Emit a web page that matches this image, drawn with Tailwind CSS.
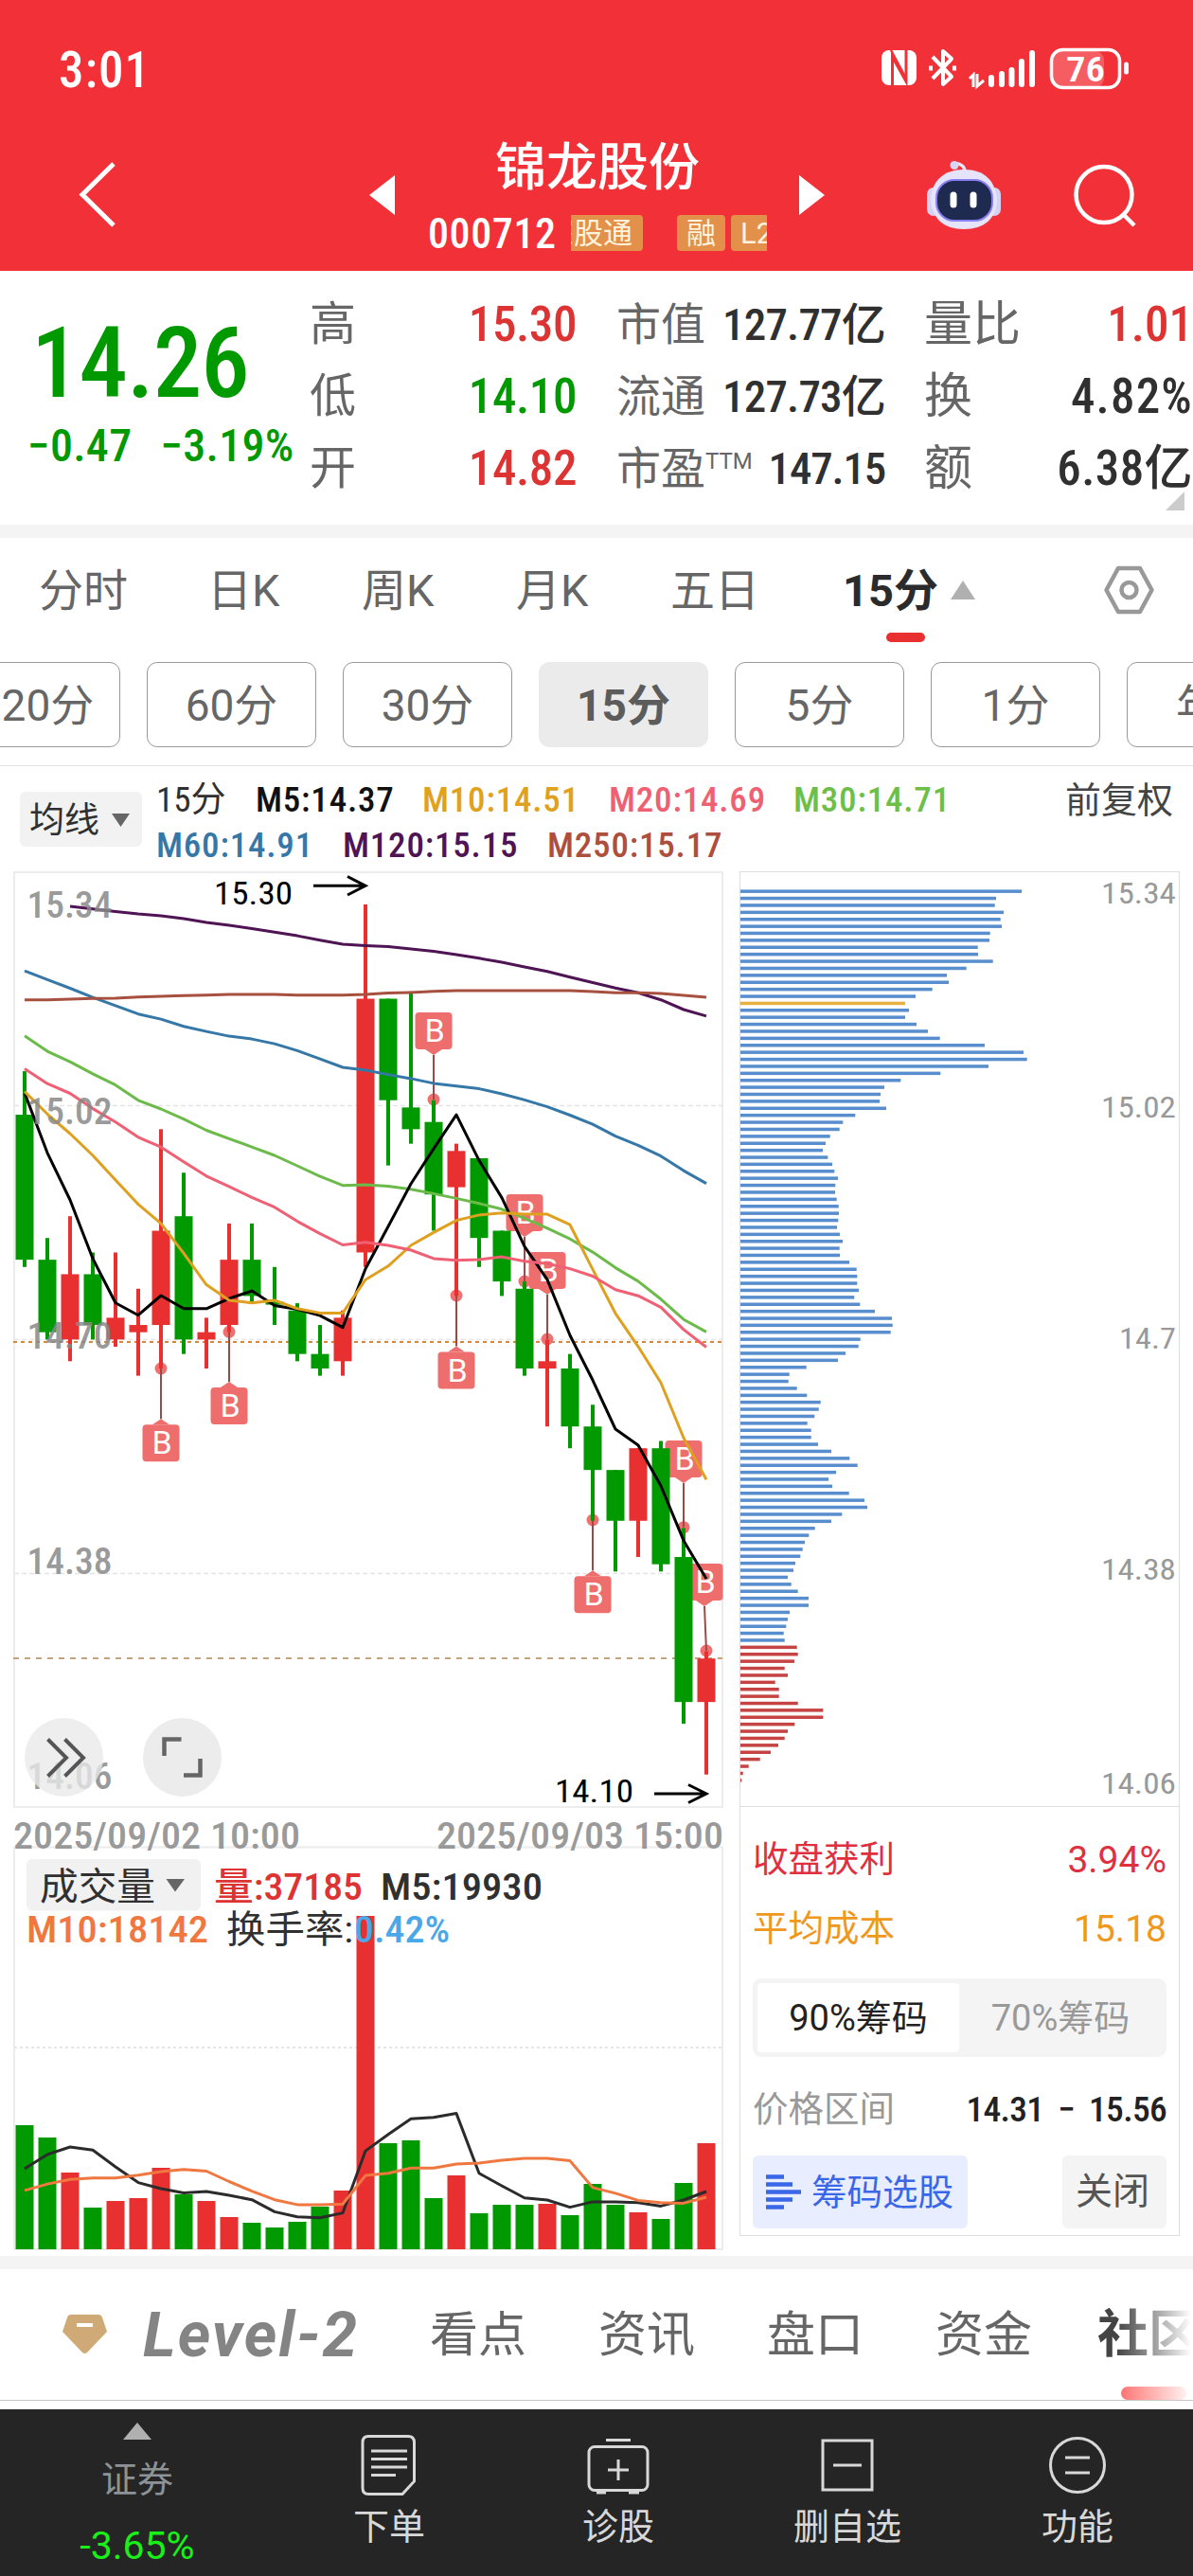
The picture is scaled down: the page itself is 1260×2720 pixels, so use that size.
<!DOCTYPE html>
<html lang="zh-CN">

<head>
  <meta charset="UTF-8">
  <title>锦龙股份 000712</title>
  <script src="https://cdn.jsdelivr.net/npm/@tailwindcss/browser@4"></script>
</head>

<body class="w-[1260px] h-[2720px] overflow-hidden bg-white text-[#303030] leading-none font-stretch-85% font-['Roboto','Noto_Sans_CJK_SC',sans-serif]">
  <!-- Header -->
  <header class="h-[286px] bg-[#f23037] text-white">
    <div class="h-[146px] pt-[49px] pl-[62px] pr-[66px] flex justify-between items-start">
      <span class="text-[53px] leading-[50px] font-medium tracking-[1px]">3:01</span>
      <svg width="264" height="50" viewBox="930 49 264 50" fill="none" stroke="#fff">
        <!-- NFC -->
        <rect x="931" y="53" width="37" height="37" rx="8" fill="#fff" stroke="none" />
        <path d="M942.500 90V60L957 86V53" stroke="#f23037" stroke-width="3" />
        <path d="M941 53L957 83" stroke="#f23037" stroke-width="2.500" />
        <!-- Bluetooth -->
        <path d="M985 60L1005 81L996 89V54L1005 62L985 83" stroke-width="4" stroke-linejoin="round" />
        <path d="M981 72h4M1006 72h4" stroke-width="5" />
        <!-- Signal -->
        <path d="M1024 83L1028 79V92M1032 78V91L1039 85" stroke-width="3" />
        <path d="M1047 82v7M1058 78v11M1068.500 74v15M1079 65v24M1090 56v33" stroke-width="6" stroke-linecap="round" />
        <!-- Battery -->
        <rect x="1111" y="54" width="55" height="38" rx="9" fill="#fff" fill-opacity=".22" stroke="none" />
        <rect x="1110.500" y="52.500" width="72" height="40" rx="12" stroke-width="3.500" />
        <path d="M1189.500 68v8" stroke-width="5" stroke-linecap="round" />
        <text x="1126" y="86" font-size="37" font-weight="600" fill="#fff" stroke="none" textLength="41" lengthAdjust="spacingAndGlyphs">76</text>
      </svg>
    </div>
    <div class="h-[120px] flex items-center">
      <svg class="ml-[80px]" width="46" height="76" viewBox="0 0 46 76" fill="none" stroke="#fff" stroke-width="5"><path d="M40 5L7 37.500L40 70" /></svg>
      <svg class="ml-[264px]" width="27" height="42" viewBox="0 0 27 42"><path d="M27 0V42L0 21Z" fill="#fff" /></svg>
      <div class="ml-[34px] w-[360px] flex flex-col items-center">
        <h1 class="pt-[2px] text-[54px] leading-[60px] font-medium">锦龙股份</h1>
        <div class="mt-[18px] w-[358px] h-[40px] flex items-center">
          <span class="w-[151px] pt-[2px] text-[44px] font-medium tracking-[0.6px]">000712</span>
          <div class="w-[207px] h-[38px] overflow-hidden flex text-[31px] leading-[39px] text-[#fff3dc]">
            <span class="w-[76px] h-[38px] shrink-0 rounded-r bg-[#e2904a] overflow-hidden flex justify-end pr-[11px]"><span class="shrink-0 whitespace-nowrap">深股通</span></span>
            <span class="ml-[36px] w-[51px] h-[38px] shrink-0 rounded bg-[#e2904a] text-center">融</span>
            <span class="ml-[6px] w-[60px] h-[38px] shrink-0 rounded bg-[#e2904a] pl-[10px] font-stretch-100%">L2</span>
          </div>
        </div>
      </div>
      <svg class="ml-[33px]" width="27" height="42" viewBox="0 0 27 42"><path d="M0 0V42L27 21Z" fill="#fff" /></svg>
      <!-- Robot -->
      <svg class="ml-[106px]" width="80" height="76" viewBox="976 167 80 76" fill="none">
        <path d="M1018 180C1018 174 1012 171 1007 172" stroke="#e9e6fb" stroke-width="3.500" />
        <circle cx="1007" cy="173.500" r="4.500" fill="#d9d6f5" />
        <rect x="978" y="197" width="14" height="30" rx="7" fill="#d5d3f4" />
        <rect x="1042" y="197" width="14" height="30" rx="7" fill="#d5d3f4" />
        <path d="M1017 178C1039 178 1050 190 1052 209C1052 230 1038 241 1017 241C996 241 983 230 982 209C983 190 996 178 1017 178Z" fill="#e6e4fa" />
        <rect x="988" y="189" width="59" height="43" rx="19" fill="#1f2a50" stroke="#8a7ff0" stroke-width="2" />
        <path d="M1006 205v10M1027 205v10" stroke="#fff" stroke-width="7" stroke-linecap="round" />
      </svg>
      <svg class="ml-[76px]" width="68" height="68" viewBox="1132 173 68 68" fill="none" stroke="#fff" stroke-width="4.500"><circle cx="1165" cy="206.500" r="29.500" /><path d="M1184 226L1197 239" /></svg>
    </div>
  </header>

  <!-- Quote summary -->
  <section class="relative h-[268px] flex pt-[19px]">
    <div class="w-[328px] pl-[30px] text-[#009900] font-[480]">
      <div class="pl-[3px] pt-[28px] text-[103px] leading-[102px] tracking-[-1px]">14.26</div>
      <div class="mt-[13px] flex gap-[30px] text-[48px] leading-[46px] tracking-[0.3px]"><span class="-ml-[1px]">−0.47</span><span>−3.19%</span></div>
    </div>
    <dl class="w-[281px] text-[51px] leading-[76px] font-[480]">
      <div class="flex justify-between"><dt class="-ml-[1px] text-[49px] font-normal text-[#666]">高</dt><dd class="text-[#dd3333] tracking-[-0.4px]">15.30</dd></div>
      <div class="flex justify-between"><dt class="-ml-[1px] text-[49px] font-normal text-[#666]">低</dt><dd class="text-[#009900] tracking-[-0.4px]">14.10</dd></div>
      <div class="flex justify-between"><dt class="-ml-[1px] text-[49px] font-normal text-[#666]">开</dt><dd class="text-[#dd3333] tracking-[-0.4px]">14.82</dd></div>
    </dl>
    <dl class="ml-[42px] w-[284px] text-[47px] leading-[76px] font-[480]">
      <div class="flex justify-between"><dt class="font-normal text-[#666]">市值</dt><dd class="tracking-[-0.8px]">127.77亿</dd></div>
      <div class="flex justify-between"><dt class="font-normal text-[#666]">流通</dt><dd class="tracking-[-0.8px]">127.73亿</dd></div>
      <div class="flex justify-between"><dt class="font-normal text-[#666] flex">市盈<span class="text-[24px] leading-[60px] font-stretch-100%">TTM</span></dt><dd class="tracking-[-1.2px]">147.15</dd></div>
    </dl>
    <dl class="ml-[41px] w-[284px] text-[51px] leading-[76px] font-[480]">
      <div class="flex justify-between"><dt class="text-[51px] font-normal text-[#666]">量比</dt><dd class="text-[#dd3333]">1.01</dd></div>
      <div class="flex justify-between"><dt class="text-[51px] font-normal text-[#666]">换</dt><dd class="tracking-[1.2px]">4.82%</dd></div>
      <div class="flex justify-between"><dt class="text-[51px] font-normal text-[#666]">额</dt><dd class="tracking-[0.4px]">6.38亿</dd></div>
    </dl>
    <svg class="absolute right-[9px] top-[233px]" width="20" height="20"><path d="M20 0V20H0Z" fill="#ccc" /></svg>
  </section>
  <div class="h-[14px] bg-[#f4f4f4]"></div>

  <!-- Period tabs -->
  <nav class="h-[131px] flex text-[47px] leading-[111px] text-[#666] font-stretch-100%">
    <span class="ml-[41px] w-[178px]">分时</span>
    <span class="w-[163px]">日K</span>
    <span class="w-[163px]">周K</span>
    <span class="w-[163px]">月K</span>
    <span class="w-[184px]">五日</span>
    <span class="w-[112px] -ml-[2px] mr-[2px] font-bold text-[#2b2b2b] flex flex-col">15分<i class="-mt-[11px] ml-[46px] w-[41px] h-[10px] rounded-full bg-[#e83030]"></i></span>
    <svg class="mt-[45px]" width="26" height="20"><path d="M13 0L26 20H0Z" fill="#b0b0b0" /></svg>
    <svg class="ml-[136px] mt-[29px]" width="53" height="52" viewBox="0 0 53 52" fill="none" stroke="#999" stroke-width="4.500" stroke-linejoin="round"><path d="M15 3H38L50.500 26L38 49H15L2.500 26Z" /><circle cx="26.500" cy="26" r="8" /></svg>
  </nav>
  <div class="h-[110px] border-b border-[#e2e2e2] flex gap-[28px] text-[46px] leading-[91px] text-[#666] text-center font-stretch-90%">
    <span class="-ml-[52px] w-[179px] h-[90px] shrink-0 rounded-[11px] border border-[#999]">120分</span>
    <span class="w-[179px] h-[90px] shrink-0 rounded-[11px] border border-[#999]">60分</span>
    <span class="w-[179px] h-[90px] shrink-0 rounded-[11px] border border-[#999]">30分</span>
    <span class="w-[179px] h-[90px] shrink-0 rounded-[11px] border border-[#ebebeb] bg-[#ebebeb] font-bold text-[#5c5c5c]">15分</span>
    <span class="w-[179px] h-[90px] shrink-0 rounded-[11px] border border-[#999]">5分</span>
    <span class="w-[179px] h-[90px] shrink-0 rounded-[11px] border border-[#999]">1分</span>
    <span class="w-[179px] h-[90px] shrink-0 rounded-[11px] border border-[#999]">年K</span>
  </div>

  <!-- Moving average legend -->
  <div class="h-[110px] pl-[21px] pr-[21px] flex">
    <button class="mt-[27px] w-[129px] h-[58px] rounded-md bg-[#f2f2f2] flex items-center pl-[10px] pt-[2px] text-[37px]">均线<svg class="ml-[13px]" width="19" height="14"><path d="M0 0H19L9.500 14Z" fill="#666" /></svg></button>
    <div class="ml-[15px] pt-[12px] grow text-[37px] leading-[48px] font-[480] tracking-[0.8px]">
      <div class="flex">
        <span class="w-[105px] font-normal tracking-normal">15分</span>
        <span class="w-[176px] text-[#111]">M5:14.37</span>
        <span class="w-[197px] text-[#e0a21e]">M10:14.51</span>
        <span class="w-[195px] text-[#ee6072]">M20:14.69</span>
        <span class="w-[176px] text-[#6cbf48]">M30:14.71</span>
      </div>
      <div class="flex">
        <span class="w-[197px] text-[#3578a8]">M60:14.91</span>
        <span class="w-[216px] text-[#4f1454]">M120:15.15</span>
        <span class="text-[#ae4f3d]">M250:15.17</span>
      </div>
    </div>
    <span class="pt-[12px] text-[38px] leading-[48px] text-[#444]">前复权</span>
  </div>

  <div class="h-[1463px] flex">
    <!-- Candles and volume -->
    <svg id="kline" width="770" height="1463" viewBox="0 919 770 1463" fill="none">
      <path d="M15 921H763V1908H15ZM15 1950.500H763V2375H15Z" stroke="#ececec" stroke-width="2" />
      <path d="M15 1167.500H763M15 1414.500H763M15 1661.500H763" stroke="#e4e4e4" stroke-width="1.500" stroke-dasharray="5 3" />
      <path d="M15 2162H763" stroke="#e6e6e6" stroke-width="2" stroke-dasharray="3 3" />
      <path d="M14 1417H763" stroke="#d8883c" stroke-width="2" stroke-dasharray="4 4" />
      <path d="M14 1751H763" stroke="#c4a47c" stroke-width="2" stroke-dasharray="6 6" />
      <g id="marks"></g>
      <g id="candles"></g>
      <g id="lines" stroke-width="3" stroke-linejoin="round"></g>
      <g font-size="39.500" font-weight="500" fill="#888" fill-opacity=".86">
        <text x="28.500" y="968.500" textLength="90" lengthAdjust="spacingAndGlyphs">15.34</text>
        <text x="28.500" y="1186.500" textLength="90" lengthAdjust="spacingAndGlyphs">15.02</text>
        <text x="28.500" y="1424" textLength="90" lengthAdjust="spacingAndGlyphs">14.70</text>
        <text x="28.500" y="1661.500" textLength="90" lengthAdjust="spacingAndGlyphs">14.38</text>
        <text x="28.500" y="1888.500" textLength="90" lengthAdjust="spacingAndGlyphs">14.06</text>
        <text x="14" y="1951.500" textLength="303" lengthAdjust="spacingAndGlyphs">2025/09/02 10:00</text>
        <text x="461" y="1951.500" textLength="303" lengthAdjust="spacingAndGlyphs">2025/09/03 15:00</text>
      </g>
      <g font-size="33.500" fill="#000">
        <text x="226" y="954.500" textLength="83" lengthAdjust="spacingAndGlyphs">15.30</text>
        <text x="586" y="1903" textLength="83" lengthAdjust="spacingAndGlyphs">14.10</text>
      </g>
      <path d="M331 935.300H386M367 925.500L386 935.300L367 945M691 1894H746M727 1884.500L746 1894L727 1903.500" stroke="#000" stroke-width="3" />
      <circle cx="67.500" cy="1855.500" r="41.500" fill="#e9e9e9" fill-opacity=".78" />
      <circle cx="192.500" cy="1855.500" r="41.500" fill="#ececec" />
      <path d="M50.500 1836.500L70 1856L50.500 1875.500M68.500 1836.500L88 1856L68.500 1875.500" stroke="#555" stroke-width="4" />
      <path d="M173.500 1854V1836.500H191.500M194 1874.500H211.500V1857" stroke="#666" stroke-width="4.500" />
      <!-- Volume legend -->
      <rect x="28" y="1963" width="184" height="54.500" rx="6" fill="#f1f1f1" />
      <path d="M175.500 1984H195L185 1997.500Z" fill="#666" />
      <g font-size="39.500" font-weight="480" fill="#303030">
        <text x="42" y="2006" font-weight="400" textLength="122" lengthAdjust="spacingAndGlyphs">成交量</text>
        <text x="226" y="2006" fill="#dd3333" textLength="157" lengthAdjust="spacingAndGlyphs">量:37185</text>
        <text x="402" y="2006" textLength="171" lengthAdjust="spacingAndGlyphs">M5:19930</text>
        <text x="28" y="2051" fill="#f07840" textLength="192" lengthAdjust="spacingAndGlyphs">M10:18142</text>
        <text x="239" y="2051" font-weight="400" textLength="134" lengthAdjust="spacingAndGlyphs">换手率:</text>
        <text x="374" y="2051" fill="#4aa8e8" textLength="101" lengthAdjust="spacingAndGlyphs">0.42%</text>
      </g>
    </svg>

    <!-- Chip distribution -->
    <div class="ml-[11px] mt-[1px] w-[465px] h-[1441px] border border-[#dedede]">
      <svg id="chips" class="block" width="463" height="986" viewBox="782 921 463 986">
        <g font-size="31.500" fill="#999" text-anchor="end">
          <text x="1242" y="954" textLength="79" lengthAdjust="spacingAndGlyphs">15.34</text>
          <text x="1242" y="1180" textLength="79" lengthAdjust="spacingAndGlyphs">15.02</text>
          <text x="1242" y="1424" textLength="60" lengthAdjust="spacingAndGlyphs">14.7</text>
          <text x="1242" y="1667.500" textLength="79" lengthAdjust="spacingAndGlyphs">14.38</text>
          <text x="1242" y="1893.500" textLength="79" lengthAdjust="spacingAndGlyphs">14.06</text>
        </g>
      </svg>
      <div class="h-[453px] border-t border-[#dedede] pl-[13px] pr-[13px] text-[37.5px]">
        <div class="mt-[30px] h-[52px] flex justify-between items-center text-[#e0303f]"><span>收盘获利</span><span class="text-[39px] font-stretch-100%">3.94%</span></div>
        <div class="mt-[21px] h-[52px] flex justify-between items-center text-[#f0981e]"><span>平均成本</span><span class="text-[39px] font-stretch-100%">15.18</span></div>
        <div class="mt-[26px] h-[83px] p-[5px] rounded-[9px] bg-[#f4f4f4] flex items-center text-center">
          <span class="w-[213px] leading-[75px] h-[73px] rounded bg-white text-[#222] text-[38px] font-stretch-100%">90%筹码</span>
          <span class="grow leading-[75px] h-[73px] text-[#999] text-[38px] font-stretch-100%">70%筹码</span>
        </div>
        <div class="mt-[30px] h-[52px] flex justify-between items-center"><span class="text-[#999]">价格区间</span><span class="font-medium text-[#222] tracking-[-0.7px] flex gap-[15px]"><span>14.31</span><span>−</span><span>15.56</span></span></div>
        <div class="mt-[22px] flex justify-between">
          <button class="w-[227px] h-[77px] rounded-md bg-[#e8eeff] text-[#3a66e8] flex items-center pl-[14px]">
            <svg class="mr-[11px]" width="37" height="37" stroke="#3a66e8" stroke-width="4.500"><path d="M0 2.500H19M0 10.500H28M0 18.500H37M0 26.500H28M0 34.500H19" /></svg><span class="pt-[2px]">筹码选股</span>
          </button>
          <button class="w-[110px] h-[77px] rounded-md bg-[#f4f4f4] text-[39px] text-[#555] pr-[4px]">关闭</button>
        </div>
      </div>
    </div>
  </div>
  <div class="h-[14px] bg-[#f4f4f4]"></div>

  <!-- Content tabs -->
  <nav class="relative h-[139px] border-b border-[#c8c8c8] flex text-[51px] leading-[140px] text-[#666]">
    <svg class="ml-[66px] mt-[48px]" width="47" height="42" viewBox="0 0 47 42"><path d="M9 0H38Q41 0 42 3L47 18L26 40Q23.500 42 21 40L0 18L5 3Q6 0 9 0Z" fill="#cfaa76" /><path d="M15 11H32" stroke="#fff" stroke-width="4" /></svg>
    <span class="ml-[38px] w-[303px] text-[66px] font-bold italic text-[#848484] tracking-[2px] font-stretch-100%">Level-2</span>
    <span class="w-[178px]">看点</span>
    <span class="w-[178px]">资讯</span>
    <span class="w-[178px]">盘口</span>
    <span class="w-[171px]">资金</span>
    <span class="w-[99px] h-[138px] shrink-0 overflow-hidden whitespace-nowrap text-[54px] font-bold text-transparent bg-clip-text bg-linear-to-r from-[#444] from-20% to-white">社区</span>
    <i class="absolute left-[1184px] bottom-0 w-[69px] h-[14px] rounded-full bg-linear-to-r from-[#fb7474] to-[#fff0f0]"></i>
  </nav>
  <div class="h-[9px]"></div>

  <!-- Bottom bar -->
  <footer class="h-[176px] bg-[#252525] flex text-[38px] text-[#d8d8d8]">
    <div class="w-[290px] flex flex-col items-center pt-[14px]">
      <svg width="30" height="18"><path d="M15 0L30 18H0Z" fill="#b0b0b0" /></svg>
      <span class="mt-[23px] text-[#8b9397]">证券</span>
      <span class="mt-[31px] text-[41px] text-[#19f019] font-stretch-100%">-3.65%</span>
    </div>
    <div class="w-[242px] flex flex-col items-center pt-[26px]">
      <svg width="60" height="66" viewBox="0 0 60 66" fill="none" stroke="#d8d8d8" stroke-width="3"><path d="M8 2.500H50Q56.500 2.500 56.500 9V50L44 63.500H8Q2 63.500 2 57V9Q2 2.500 8 2.500ZM11 18H49M11 26.500H49M11 35H49M11 43.500H37" /></svg>
      <span class="mt-[13px]">下单</span>
    </div>
    <div class="w-[242px] flex flex-col items-center pt-[26px]">
      <svg width="66" height="66" viewBox="0 0 66 66" fill="none" stroke="#d8d8d8" stroke-width="3"><rect x="2" y="13.500" width="62" height="46" rx="6" /><path d="M20 6.500H46M33 27V49M22 38H44M10 62H20M44 62H55" /></svg>
      <span class="mt-[13px]">诊股</span>
    </div>
    <div class="w-[242px] flex flex-col items-center pt-[26px]">
      <svg width="56" height="66" viewBox="0 0 56 66" fill="none" stroke="#d8d8d8" stroke-width="3"><rect x="2" y="7" width="52" height="52" /><path d="M13 33H43" /></svg>
      <span class="mt-[13px]">删自选</span>
    </div>
    <div class="w-[244px] flex flex-col items-center pt-[26px]">
      <svg width="60" height="66" viewBox="0 0 60 66" fill="none" stroke="#d8d8d8" stroke-width="3"><circle cx="30" cy="33" r="28.500" /><path d="M17 25H43M17 41H43" /></svg>
      <span class="mt-[13px]">功能</span>
    </div>
  </footer>

  <script>
    const RED = '#e83030', GREEN = '#009900';
    const x = i => 26 + 24 * i;
    const y = p => 955 + (15.30 - p) * 765.6;

    // [colour, high, body top, body bottom, low, volume height]
    const candles = [
      ['g', 15.07, 15.01, 14.81, 14.80, 131], ['g', 14.84, 14.81, 14.71, 14.70, 118],
      ['r', 14.87, 14.79, 14.70, 14.67, 81], ['g', 14.82, 14.79, 14.72, 14.70, 44],
      ['r', 14.82, 14.73, 14.70, 14.69, 51], ['r', 14.77, 14.72, 14.71, 14.65, 54],
      ['r', 14.99, 14.85, 14.72, 14.66, 86], ['g', 14.93, 14.87, 14.70, 14.68, 58],
      ['r', 14.73, 14.71, 14.70, 14.66, 51], ['r', 14.86, 14.81, 14.72, 14.71, 34],
      ['g', 14.86, 14.81, 14.76, 14.75, 28], ['g', 14.80, 14.752, 14.748, 14.72, 23],
      ['g', 14.75, 14.74, 14.68, 14.67, 29], ['g', 14.72, 14.68, 14.66, 14.65, 45],
      ['r', 14.74, 14.73, 14.67, 14.65, 62], ['r', 15.30, 15.17, 14.82, 14.80, 352],
      ['g', 15.17, 15.17, 15.03, 14.94, 112], ['g', 15.18, 15.02, 14.99, 14.97, 115],
      ['g', 15.03, 15.00, 14.90, 14.85, 54], ['r', 14.97, 14.96, 14.91, 14.76, 78],
      ['g', 14.95, 14.95, 14.84, 14.80, 38], ['g', 14.85, 14.85, 14.78, 14.76, 47],
      ['g', 14.78, 14.77, 14.66, 14.65, 47], ['r', 14.70, 14.67, 14.66, 14.58, 48],
      ['g', 14.68, 14.66, 14.58, 14.55, 36], ['g', 14.61, 14.58, 14.52, 14.45, 69],
      ['g', 14.52, 14.52, 14.45, 14.38, 47], ['r', 14.55, 14.55, 14.45, 14.40, 39],
      ['g', 14.56, 14.55, 14.39, 14.38, 32], ['g', 14.44, 14.40, 14.20, 14.17, 70],
      ['r', 14.27, 14.26, 14.20, 14.10, 112]
    ];
    document.getElementById('candles').innerHTML = candles.map(([c, h, t, b, l, v], i) => {
      const col = c === 'r' ? RED : GREEN;
      return `<rect x="${x(i) - 2}" y="${y(h)}" width="4" height="${y(l) - y(h)}" fill="${col}"/>` +
        `<rect x="${x(i) - 9.5}" y="${y(t)}" width="19" height="${Math.max(y(b) - y(t), 3)}" fill="${col}"/>` +
        `<rect x="${x(i) - 9.5}" y="${2375 - v}" width="19" height="${v}" fill="${col}"/>`;
    }).join('');

    // [candle index, box top, dot y, box centre x]
    const marks = [[6, 1504.3, 1445], [9, 1465, 1406.3], [18, 1069, 1161], [19, 1427.5, 1368], [22, 1261, 1353],
      [23, 1322, 1414], [25, 1664.3, 1605], [29, 1521, 1612.7], [30, 1651, 1743, 744]];
    document.getElementById('marks').innerHTML = marks.map(([i, top, dot, cx = x(i)]) => {
      const below = top > dot;
      const edge = below ? top : top + 39;
      const tip = below ? edge - 6 : edge + 6;
      return `<circle cx="${x(i)}" cy="${dot}" r="6.500" fill="#f07070"/>` +
        `<path d="M${cx} ${tip}L${x(i)} ${dot}" stroke="#a04848" stroke-width="2"/>` +
        `<path d="M${cx - 9} ${edge}L${cx} ${tip}L${cx + 9} ${edge}Z" fill="#ee6e6e"/>` +
        `<rect x="${cx - 19.5}" y="${top}" width="39" height="39" rx="4" fill="#ee6e6e"/>` +
        `<text x="${cx + 1}" y="${top + 31}" font-size="34" class="font-stretch-100%" fill="#fff" text-anchor="middle">B</text>`;
    }).join('');

    // Averages: [colour, first index, y values]
    const lines = [
      ['#4f1454', 2, [957.1, 959.7, 962.4, 965.1, 967, 970.1, 973.9, 977, 980.4, 984.2, 988.1, 992.7, 996.9, 998.4, 999.6, 1002.1, 1004.6, 1007.9, 1011.8, 1016, 1021, 1025.7, 1031.8, 1037.5, 1043.2, 1048.2, 1055.7, 1066, 1072.9]],
      ['#3578a8', 0, [1025.2, 1034.4, 1043.5, 1053.1, 1061.9, 1070.7, 1076.1, 1083.7, 1089.1, 1094.1, 1097.1, 1102.1, 1109.4, 1118.2, 1127, 1130, 1134.6, 1138.9, 1143.9, 1146.8, 1149.6, 1155, 1161.4, 1168.6, 1177.5, 1187.1, 1199.6, 1209.3, 1220.7, 1236.1, 1249.6]],
      ['#a85040', 0, [1055.8, 1055.8, 1055, 1054.3, 1053.9, 1052.7, 1052, 1051.2, 1050.8, 1050, 1050, 1050, 1050.8, 1050.8, 1050.8, 1050, 1048.6, 1047.9, 1046.8, 1046, 1046, 1046, 1046, 1046, 1046, 1047.1, 1048.2, 1048.2, 1048.9, 1051.1, 1052.9]],
      ['#6cbb4a', 0, [1093.7, 1110.1, 1121.2, 1133.9, 1145.7, 1161.8, 1171, 1181.7, 1193.5, 1202.3, 1211.1, 1220, 1231, 1242.1, 1251.7, 1250.9, 1252.5, 1255.7, 1260.4, 1265.4, 1270.7, 1276.8, 1286.4, 1296.8, 1308.2, 1322.1, 1338.6, 1352.9, 1371.8, 1393.2, 1406.4]],
      ['#000', 0, [1154.1, 1217.3, 1267, 1329, 1375.7, 1388.7, 1368, 1381.8, 1381.8, 1371.1, 1363.1, 1378.4, 1382.6, 1389.1, 1401.7, 1339.8, 1295, 1250, 1212.9, 1177.1, 1225.4, 1264.6, 1316.1, 1351.1, 1410, 1457.3, 1509, 1526, 1569, 1626.7, 1667]],
      ['#dfa020', 0, [1152.6, 1176.3, 1197, 1220, 1246, 1271.6, 1291.9, 1323.3, 1356.6, 1373, 1375.7, 1373, 1381.8, 1386.4, 1386.4, 1351.2, 1336.8, 1315, 1301.4, 1288.6, 1282.9, 1280.7, 1282.1, 1282.1, 1293.2, 1340.4, 1386.8, 1421.8, 1460, 1518.3, 1562.3]],
      ['#f06074', 0, [1128.5, 1144.2, 1154.5, 1170.6, 1184.7, 1200.8, 1211.2, 1226.8, 1241.8, 1252.9, 1264.3, 1274.7, 1289.6, 1302.6, 1314.5, 1311.8, 1315, 1320, 1328.9, 1330.7, 1330, 1327.1, 1331.8, 1334.3, 1339.6, 1347.5, 1361.8, 1368.2, 1380.4, 1403.9, 1422.5]],
      ['#2b2b2b', 0, [2289.9, 2274.9, 2267, 2270.3, 2288, 2304.6, 2311, 2315.5, 2314, 2318.1, 2322.7, 2335.4, 2340.7, 2341.8, 2336.6, 2271.1, 2253.8, 2237.2, 2235.7, 2231.6, 2294.8, 2308, 2320.8, 2323, 2330.6, 2324.9, 2324.9, 2325.7, 2329.4, 2323, 2314]],
      ['#f07840', 0, [2312.9, 2306.1, 2301.2, 2299.7, 2299.7, 2296.7, 2292.9, 2290.7, 2292.5, 2303.5, 2313.6, 2322.7, 2327.9, 2327.9, 2327.2, 2297.1, 2294.8, 2289.2, 2289.2, 2285, 2283.9, 2280.9, 2279, 2279, 2281.6, 2309.9, 2315.9, 2323.4, 2325.7, 2326.4, 2320]]
    ];
    document.getElementById('lines').innerHTML = lines.map(([col, start, ys]) =>
      `<polyline stroke="${col}" points="${ys.map((v, k) => x(start + k) + ',' + v).join(' ')}"/>`).join('');

    // Chip bars, top price first, in thirds of a pixel
    const chips = [927, 846, 842, 870, 860, 864, 827, 825, 788, 789, 836, 752, 690, 696, 644, 591, 558, 570, 558, 594, 630, 668, 810, 933, 944, 822, 670, 544, 492, 480, 477, 498, 400, 361, 350, 320, 306, 297, 313, 327, 334, 345, 337, 336, 341, 347, 348, 346, 342, 351, 360, 350, 351, 381, 404, 406, 406, 411, 397, 415, 462, 516, 518, 512, 416, 410, 369,
      345, 245, 191, 188, 215, 247, 290, 284, 271, 248, 260, 260, 282, 324, 382, 407, 339, 315, 327, 380, 429, 438, 358, 324, 272, 253, 240, 233, 226, 210, 204, 186, 197, 218, 252, 252, 192, 186, 181, 173, 176,
      215, 218, 207, 176, 186, 146, 158, 158, 218, 298, 298, 208, 186, 176, 156, 132, 98, 62, 44, 40];
    document.getElementById('chips').insertAdjacentHTML('beforeend', '<g>' + chips.map((v, k) => {
      const col = k === 16 ? '#e8b040' : k < 108 ? '#588dce' : '#c54343';
      return `<rect x="782" y="${(939.4 + k * 7.391).toFixed(1)}" width="${((v - 36) / 3).toFixed(1)}" height="3.5" fill="${col}"/>`;
    }).join('') + '</g>');
  </script>
</body>

</html>
